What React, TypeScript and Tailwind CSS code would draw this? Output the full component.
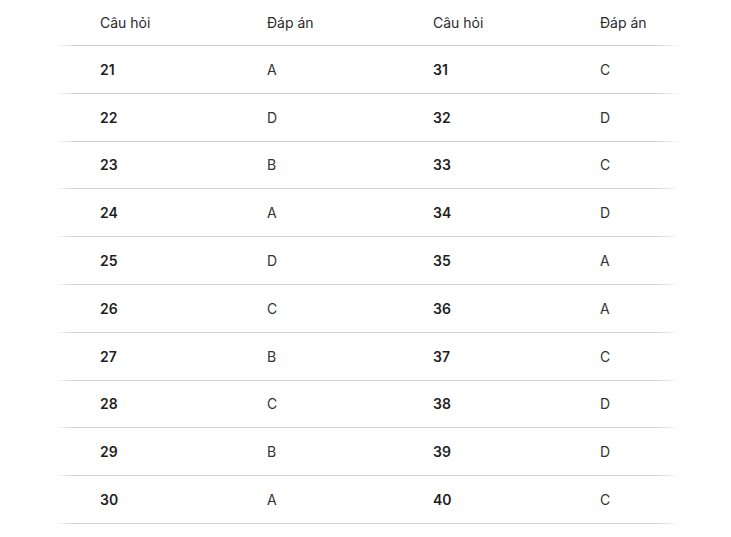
import React from "react";

const left = [
  ["21", "A"], ["22", "D"], ["23", "B"], ["24", "A"], ["25", "D"],
  ["26", "C"], ["27", "B"], ["28", "C"], ["29", "B"], ["30", "A"],
];
const right = [
  ["31", "C"], ["32", "D"], ["33", "C"], ["34", "D"], ["35", "A"],
  ["36", "A"], ["37", "C"], ["38", "D"], ["39", "D"], ["40", "C"],
];

function Line() {
  return <div className="h-px w-full bg-[linear-gradient(to_right,transparent,#d0d0d0_3%,#d0d0d0_96%,transparent)]" />;
}

export default function App() {
  return (
    <div className="w-[731px] h-[537px] bg-white" style={{ fontFamily: "Inter, 'Noto Sans', sans-serif" }}>
      <div className="ml-[56px] w-[624px]">
        <div className="h-[45px] grid grid-cols-[167px_166px_167px_80px] pl-[44px] items-center text-[14px] text-[#2a2a2a]">
          <div>Câu hỏi</div>
          <div>Đáp án</div>
          <div>Câu hỏi</div>
          <div>Đáp án</div>
        </div>
        <Line />
        {left.map((l, i) => (
          <div key={i}>
            <div className="h-[46.8px] grid grid-cols-[167px_166px_167px_80px] pl-[44px] items-center text-[14px]">
              <div className="font-semibold text-[#1f1f1f]">{l[0]}</div>
              <div className="text-[#333]">{l[1]}</div>
              <div className="font-semibold text-[#1f1f1f]">{right[i][0]}</div>
              <div className="text-[#333]">{right[i][1]}</div>
            </div>
            <Line />
          </div>
        ))}
      </div>
    </div>
  );
}
